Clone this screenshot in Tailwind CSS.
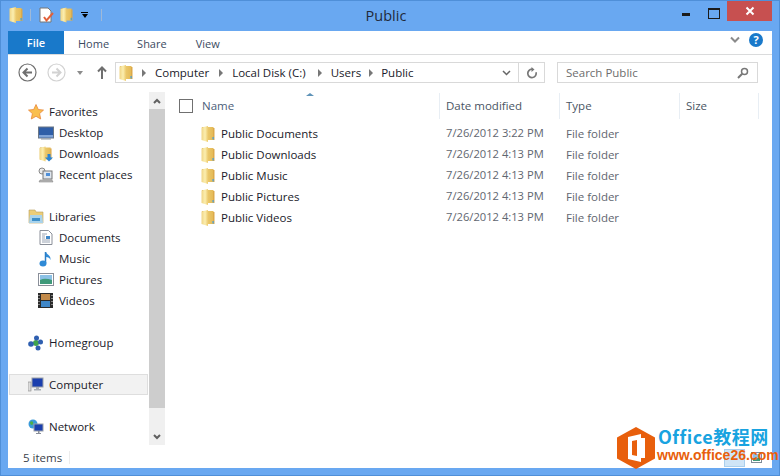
<!DOCTYPE html>
<html lang="en">
<head>
<meta charset="UTF-8" />
<title>Public</title>
<script src="https://cdn.jsdelivr.net/npm/@tailwindcss/browser@4"></script>
</head>
<body class="m-0 overflow-hidden">
<svg class="absolute w-0 h-0" width="0" height="0">
  <defs>
    <linearGradient id="fg" x1="0" y1="0" x2="1" y2="0"><stop offset="0" stop-color="#f0d585"/><stop offset=".55" stop-color="#fbeeb0"/><stop offset="1" stop-color="#ecc96c"/></linearGradient>
    <linearGradient id="fb" x1="0" y1="0" x2="1" y2="0"><stop offset="0" stop-color="#c99a3a"/><stop offset=".4" stop-color="#eccb70"/><stop offset="1" stop-color="#e4b955"/></linearGradient>
    <symbol id="folder" viewBox="0 0 14 16">
      <path d="M1 1h11.500v13H1z" fill="url(#fb)"/>
      <path d="M0.500 1.500 7 0v16L0.500 14z" fill="url(#fg)"/>
      <rect x="12" y="2" width="1.500" height="12" fill="#dca94a"/>
      <rect x="11.500" y="11" width="1.200" height="2.500" fill="#3f9fe0"/>
    </symbol>
  </defs>
</svg>

<div class="relative w-[780px] h-[476px] bg-[#69a8f1] border border-[#4f8fd8] font-['Open_Sans',sans-serif] text-[11.500px] text-[#1a1a2a] overflow-hidden flex flex-col box-border">

  <!-- title bar -->
  <div class="relative h-[30px] shrink-0 flex items-start">
    <div class="flex items-center pl-[8px] pt-[6px] gap-[7px]">
      <svg class="w-[14px] h-[16px]"><use href="#folder"/></svg>
      <div class="w-px h-[12px] bg-[#9fb9d8] mr-[1px]"></div>
      <svg class="w-[15px] h-[16px]" viewBox="0 0 15 16">
        <path d="M1 1h8l3 3v11H1z" fill="#fff" stroke="#777"/>
        <path d="M5 10l2.500 3.500L14 6" fill="none" stroke="#e2603a" stroke-width="2"/>
      </svg>
      <svg class="w-[13px] h-[16px] -ml-[1px]"><use href="#folder"/></svg>
      <div class="flex flex-col items-center ml-[1px]">
        <div class="w-[7px] h-px bg-black mb-px"></div>
        <div class="w-0 h-0 border-x-[3.500px] border-x-transparent border-t-[4px] border-t-black"></div>
      </div>
      <div class="w-px h-[12px] bg-[#9fb9d8] ml-[6px]"></div>
    </div>
    <div class="absolute left-0 right-[8px] top-[5px] text-center text-[14.500px] leading-[20px] text-[#1f2a3a]">Public</div>
    <div class="absolute right-[7px] top-0 flex items-start">
      <div class="w-[8px] h-[3px] bg-[#1b1b1b] mt-[12px] mr-[18px]"></div>
      <div class="w-[10px] h-[8px] border border-[#1b1b1b] border-t-2 mt-[7px] mr-[7px] box-content"></div>
      <div class="w-[45px] h-[20px] bg-[#c75050] flex items-center justify-center">
        <svg width="10" height="10" viewBox="0 0 10 10"><path d="M1.500 1.500l7 7M8.500 1.500l-7 7" stroke="#fff" stroke-width="2"/></svg>
      </div>
    </div>
  </div>

  <!-- window body -->
  <div class="mx-[7px] flex-1 bg-white flex flex-col min-h-0">

    <!-- ribbon tabs -->
    <div class="h-[24px] shrink-0 border-b border-[#dadbdc] flex items-start relative">
      <div class="w-[56px] h-[23px] bg-[#1979ca] text-white font-semibold text-[11px] leading-[23px] text-center">File</div>
      <div class="pl-[14px] text-[11px] leading-[25px] text-[#3b4a5f]">Home</div>
      <div class="pl-[28px] text-[11px] leading-[25px] text-[#3b4a5f]">Share</div>
      <div class="pl-[29px] text-[11px] leading-[25px] text-[#3b4a5f]">View</div>
      <div class="ml-auto flex items-center pr-[9px] pt-[2px] gap-[9px]">
        <svg width="10" height="8" viewBox="0 0 10 8"><path d="M1 1.500l4 4 4-4" fill="none" stroke="#8a8a8a" stroke-width="2"/></svg>
        <div class="w-[14px] h-[14px] rounded-full bg-[#1979ca] text-white font-bold text-[11px] leading-[14px] text-center">?</div>
      </div>
    </div>

    <!-- address row -->
    <div class="h-[35px] shrink-0 flex items-center relative">
      <svg class="ml-[10px]" width="19" height="19" viewBox="0 0 19 19"><circle cx="9.500" cy="9.500" r="8.500" fill="#fff" stroke="#6f6f6f" stroke-width="1.200"/><path d="M14 9.500H6M9.500 5.500l-4 4 4 4" fill="none" stroke="#6f6f6f" stroke-width="2"/></svg>
      <svg class="ml-[10px]" width="19" height="19" viewBox="0 0 19 19"><circle cx="9.500" cy="9.500" r="8.500" fill="#fff" stroke="#d2d2d2" stroke-width="1.200"/><path d="M5 9.500h8M9.500 5.500l4 4-4 4" fill="none" stroke="#d2d2d2" stroke-width="2"/></svg>
      <div class="ml-[11px] w-0 h-0 border-x-[3.500px] border-x-transparent border-t-[4px] border-t-[#8c8c8c]"></div>
      <svg class="ml-[14px]" width="10" height="13" viewBox="0 0 10 13"><path d="M5 13V2M1 5.500l4-4 4 4" fill="none" stroke="#6f6f6f" stroke-width="2"/></svg>
      <div class="ml-[8px] w-[430px] h-[21px] border border-[#d9d9d9] flex items-center box-border">
        <svg class="ml-[3px] w-[14px] h-[16px]"><use href="#folder"/></svg>
        <span class="ml-[9px] w-0 h-0 border-y-[4px] border-y-transparent border-l-[4px] border-l-[#777]"></span>
        <span class="ml-[9px]">Computer</span>
        <span class="ml-[10px] w-0 h-0 border-y-[4px] border-y-transparent border-l-[4px] border-l-[#777]"></span>
        <span class="ml-[9px]">Local Disk (C:)</span>
        <span class="ml-[12px] w-0 h-0 border-y-[4px] border-y-transparent border-l-[4px] border-l-[#777]"></span>
        <span class="ml-[9px]">Users</span>
        <span class="ml-[8px] w-0 h-0 border-y-[4px] border-y-transparent border-l-[4px] border-l-[#777]"></span>
        <span class="ml-[8px]">Public</span>
        <div class="ml-auto flex items-center h-full">
          <svg width="9" height="6" viewBox="0 0 9 6" class="mr-[7px]"><path d="M1 1l3.500 3.500L8 1" fill="none" stroke="#666" stroke-width="1.500"/></svg>
          <div class="w-[26px] h-full border-l border-[#d9d9d9] flex items-center justify-center">
            <svg width="12" height="12" viewBox="0 0 12 12"><path d="M6 2.200a4.200 4.200 0 1 0 4 3" fill="none" stroke="#777" stroke-width="1.700"/><path d="M5.500 0v5l3-2.500z" fill="#777"/></svg>
          </div>
        </div>
      </div>
      <div class="ml-[12px] w-[201px] h-[21px] border border-[#d9d9d9] flex items-center justify-between pl-[8px] pr-[8px] box-border text-[#6d6d6d]">
        <span>Search Public</span>
        <svg width="12" height="12" viewBox="0 0 12 12"><circle cx="7.500" cy="4.500" r="3" fill="none" stroke="#777" stroke-width="1.500"/><path d="M5.200 6.800L1 11" stroke="#777" stroke-width="2"/></svg>
      </div>
    </div>

    <!-- main -->
    <div class="flex-1 flex min-h-0">
      <!-- nav pane -->
      <div class="w-[157px] shrink-0 relative pt-[11px]">
        <div class="h-[21px] flex items-center pl-[20px] gap-[5px]">
          <svg width="16" height="16" viewBox="0 0 16 16"><path d="M8 0.500l2.300 5 5.200.6-3.900 3.500 1.100 5.400L8 12.300 3.300 15l1.100-5.400L.5 6.100l5.200-.6z" fill="#f9bf4e" stroke="#e8873a" stroke-width=".8"/></svg>
          <span>Favorites</span>
        </div>
        <div class="h-[21px] flex items-center pl-[30px] gap-[5px]">
          <svg width="16" height="14" viewBox="0 0 16 14"><rect x=".5" y="1" width="15" height="11" fill="#2f5ea8" stroke="#6b7785"/><path d="M1 9h14v2.500H1z" fill="#7fa3d8"/><path d="M3 12.500h10v1H3z" fill="#8893a0"/></svg>
          <span>Desktop</span>
        </div>
        <div class="h-[21px] flex items-center pl-[31px] gap-[5px]">
          <svg width="15" height="16" viewBox="0 0 15 16"><use href="#folder" width="13" height="16"/><path d="M8.500 8h3v3.500H14L10 15.500 6 11.500h2.500z" fill="#2a83d3"/></svg>
          <span>Downloads</span>
        </div>
        <div class="h-[21px] flex items-center pl-[30px] gap-[5px]">
          <svg width="16" height="16" viewBox="0 0 16 16"><circle cx="4" cy="4" r="3" fill="#ececec" stroke="#888"/><rect x="5" y="4" width="9" height="8" fill="#dfe6ee" stroke="#777"/><rect x="8" y="6" width="4" height="3" fill="#4f8fd8"/><path d="M2 13h12l1 2H1z" fill="#bcbcbc" stroke="#777" stroke-width=".5"/></svg>
          <span>Recent places</span>
        </div>
        <div class="h-[21px]"></div>
        <div class="h-[21px] flex items-center pl-[20px] gap-[5px]">
          <svg width="16" height="15" viewBox="0 0 16 15"><path d="M1 1h6l1 2h7v11H1z" fill="#eccd78" stroke="#b9a05c" stroke-width=".6"/><path d="M2 6h12l1 8H1z" fill="#a9d3ec"/><path d="M4 9h8v3H4z" fill="#3e8fc9"/></svg>
          <span>Libraries</span>
        </div>
        <div class="h-[21px] flex items-center pl-[31px] gap-[6px]">
          <svg width="14" height="15" viewBox="0 0 14 15"><path d="M1 .5h8.500L13 4v10.500H1z" fill="#fff" stroke="#8a8f99"/><path d="M3 4h5M3 6h3M3 8h3M3 10h8M3 12h8" stroke="#9aa4b3"/><rect x="7" y="6" width="4" height="3" fill="#3f87c8"/></svg>
          <span>Documents</span>
        </div>
        <div class="h-[21px] flex items-center pl-[31px] gap-[6px]">
          <svg width="14" height="16" viewBox="0 0 14 16"><path d="M6.500 1v11" stroke="#2a7ec6" stroke-width="1.500"/><ellipse cx="4" cy="12.500" rx="3.500" ry="3" fill="#2f8ad6"/><path d="M7 1c1 3 5 3 4.500 8-.5-2-2.500-3-4.500-3z" fill="#2f8ad6"/></svg>
          <span>Music</span>
        </div>
        <div class="h-[21px] flex items-center pl-[30px] gap-[5px]">
          <svg width="16" height="13" viewBox="0 0 16 13"><rect x=".5" y=".5" width="15" height="12" fill="#fff" stroke="#8a8f99"/><rect x="2" y="2" width="12" height="5" fill="#8cc1e6"/><path d="M2 7c4-2 8-1 12 0v4H2z" fill="#3f9a7a"/></svg>
          <span>Pictures</span>
        </div>
        <div class="h-[21px] flex items-center pl-[30px] gap-[5px]">
          <svg width="15" height="15" viewBox="0 0 15 15"><rect width="15" height="15" fill="#2a2a2a"/><rect x="3" y="1" width="9" height="6" fill="#c28a4a"/><rect x="3" y="8" width="9" height="6" fill="#3f87c8"/><path d="M1 2v1M1 5v1M1 8v1M1 11v1M14 2v1M14 5v1M14 8v1M14 11v1" stroke="#ddd"/></svg>
          <span class="ml-px">Videos</span>
        </div>
        <div class="h-[21px]"></div>
        <div class="h-[21px] flex items-center pl-[20px] gap-[5px]">
          <svg width="16" height="16" viewBox="0 0 16 16"><circle cx="8" cy="8" r="3" fill="#3fa34d"/><circle cx="8.500" cy="3" r="2.500" fill="#2f5fb0"/><circle cx="3" cy="9" r="2.800" fill="#2f5fb0"/><circle cx="12.500" cy="7" r="2.500" fill="#2f5fb0"/><circle cx="10" cy="13" r="2.500" fill="#2f5fb0"/></svg>
          <span>Homegroup</span>
        </div>
        <div class="h-[21px]"></div>
        <div class="h-[21px] flex items-center pl-[19px] gap-[5px] bg-[#f2f2f2] border border-[#dedede] w-[139px] box-border ml-px">
          <svg width="16" height="16" viewBox="0 0 16 16" class="-ml-[1px]"><rect x="0" y="5" width="3" height="9" fill="#dcdcdc" stroke="#888" stroke-width=".6"/><rect x="4" y="1" width="11" height="9" fill="#1b3fae" stroke="#9aa0a8"/><path d="M8 10h3v2H8zM6 12h7v1.500H6z" fill="#a8adb4"/></svg>
          <span>Computer</span>
        </div>
        <div class="h-[21px]"></div>
        <div class="h-[21px] flex items-center pl-[20px] gap-[5px]">
          <svg width="16" height="16" viewBox="0 0 16 16"><circle cx="5" cy="5" r="4.500" fill="#3a9ad9"/><path d="M2 3c2-2 4 0 3 2s-3 1-3-2z" fill="#4fae4a"/><rect x="6" y="5" width="9" height="7" fill="#1b3fae" stroke="#9aa0a8"/><path d="M10 12h1.500v2H10zM8 14h5v1H8z" fill="#8a8f99"/></svg>
          <span>Network</span>
        </div>
        <!-- scrollbar -->
        <div class="absolute left-[141px] top-[2px] bottom-[2px] w-[16px] bg-[#f0f0f0] flex flex-col">
          <div class="h-[17px] flex items-center justify-center">
            <svg width="8" height="6" viewBox="0 0 8 6"><path d="M1 5l3-3 3 3" fill="none" stroke="#606060" stroke-width="2"/></svg>
          </div>
          <div class="h-[299px] bg-[#cdcdcd]"></div>
          <div class="mt-auto h-[17px] flex items-center justify-center">
            <svg width="8" height="6" viewBox="0 0 8 6"><path d="M1 1l3 3 3-3" fill="none" stroke="#606060" stroke-width="2"/></svg>
          </div>
        </div>
      </div>

      <!-- file list -->
      <div class="flex-1 relative">
        <div class="h-[32px] flex items-center text-[#4c607a] relative">
          <div class="ml-[14px] w-[14px] h-[14px] border border-[#707070] bg-white box-border"></div>
          <div class="absolute left-[141px] top-[3px] w-0 h-0 border-x-[4px] border-x-transparent border-b-[3px] border-b-[#5f93b8]"></div>
          <div class="ml-[8px] w-[238px] h-[26px] leading-[25px] pl-[1px]">Name</div>
          <div class="w-[120px] h-[26px] leading-[25px] border-l border-[#e8eef4] pl-[6px] text-[#4a5563] box-border">Date modified</div>
          <div class="w-[120px] h-[26px] leading-[25px] border-l border-[#e8eef4] pl-[6px] text-[#4a5563] box-border">Type</div>
          <div class="w-[80px] h-[26px] leading-[25px] border-x border-[#e8eef4] pl-[6px] text-[#4a5563] box-border">Size</div>
        </div>
        <div class="pt-[1px]">
          <div class="h-[21px] flex items-center">
            <svg class="ml-[36px] w-[14px] h-[16px]"><use href="#folder"/></svg>
            <div class="ml-[6px] w-[225px]">Public Documents</div>
            <div class="w-[120px] text-[11.200px] text-[#5f6670]">7/26/2012 3:22 PM</div>
            <div class="text-[#5f6670]">File folder</div>
          </div>
          <div class="h-[21px] flex items-center">
            <svg class="ml-[36px] w-[14px] h-[16px]"><use href="#folder"/></svg>
            <div class="ml-[6px] w-[225px]">Public Downloads</div>
            <div class="w-[120px] text-[11.200px] text-[#5f6670]">7/26/2012 4:13 PM</div>
            <div class="text-[#5f6670]">File folder</div>
          </div>
          <div class="h-[21px] flex items-center">
            <svg class="ml-[36px] w-[14px] h-[16px]"><use href="#folder"/></svg>
            <div class="ml-[6px] w-[225px]">Public Music</div>
            <div class="w-[120px] text-[11.200px] text-[#5f6670]">7/26/2012 4:13 PM</div>
            <div class="text-[#5f6670]">File folder</div>
          </div>
          <div class="h-[21px] flex items-center">
            <svg class="ml-[36px] w-[14px] h-[16px]"><use href="#folder"/></svg>
            <div class="ml-[6px] w-[225px]">Public Pictures</div>
            <div class="w-[120px] text-[11.200px] text-[#5f6670]">7/26/2012 4:13 PM</div>
            <div class="text-[#5f6670]">File folder</div>
          </div>
          <div class="h-[21px] flex items-center">
            <svg class="ml-[36px] w-[14px] h-[16px]"><use href="#folder"/></svg>
            <div class="ml-[6px] w-[225px]">Public Videos</div>
            <div class="w-[120px] text-[11.200px] text-[#5f6670]">7/26/2012 4:13 PM</div>
            <div class="text-[#5f6670]">File folder</div>
          </div>
        </div>
      </div>
    </div>

    <!-- status bar -->
    <div class="h-[21px] shrink-0 flex items-center">
      <div class="pl-[15px] h-[13px] leading-[13px] border-r border-[#ececec] w-[62px] whitespace-nowrap text-[#3a3f4a]">5 items</div>
      <div class="ml-auto mr-[10px] flex items-center gap-[6px]">
        <div class="w-[21px] h-[18px] bg-[#cfe5f7] border border-[#a9cfee] box-border"></div>
        <svg width="11" height="11" viewBox="0 0 11 11"><rect x=".5" y=".5" width="10" height="10" fill="#fff" stroke="#7f8c99"/><rect x="2" y="2" width="7" height="4" fill="#8cc1e6"/><rect x="2" y="6" width="7" height="3" fill="#3f9a7a"/></svg>
      </div>
    </div>
  </div>
  <div class="h-[7px] shrink-0"></div>

  <!-- watermark -->
  <div class="absolute left-[616px] top-[426px] flex items-start">
    <svg width="38" height="42" viewBox="0 0 38 42"><path d="M19 0l19 10.500v21L19 42 0 31.500v-21z" fill="#e85f0c"/><path d="M11 10l13-3v28l-13-3z" fill="#fff"/><path d="M24 11h4v20h-4z" fill="#fff"/><path d="M15 14l5-1v16l-5-1z" fill="#e85f0c"/></svg>
    <div class="ml-[3px] -mt-[3px]">
      <div class="font-['Noto_Sans_CJK_SC',sans-serif] font-bold text-[#19a3e0] text-[18px] leading-[24px] tracking-[0.5px] whitespace-nowrap">Office教程网</div>
      <div class="font-['Liberation_Sans',sans-serif] font-bold text-[#e85f0c] text-[14px] leading-[14px] whitespace-nowrap -ml-[1px]">www.office26.com</div>
    </div>
  </div>
</div>
</body>
</html>
